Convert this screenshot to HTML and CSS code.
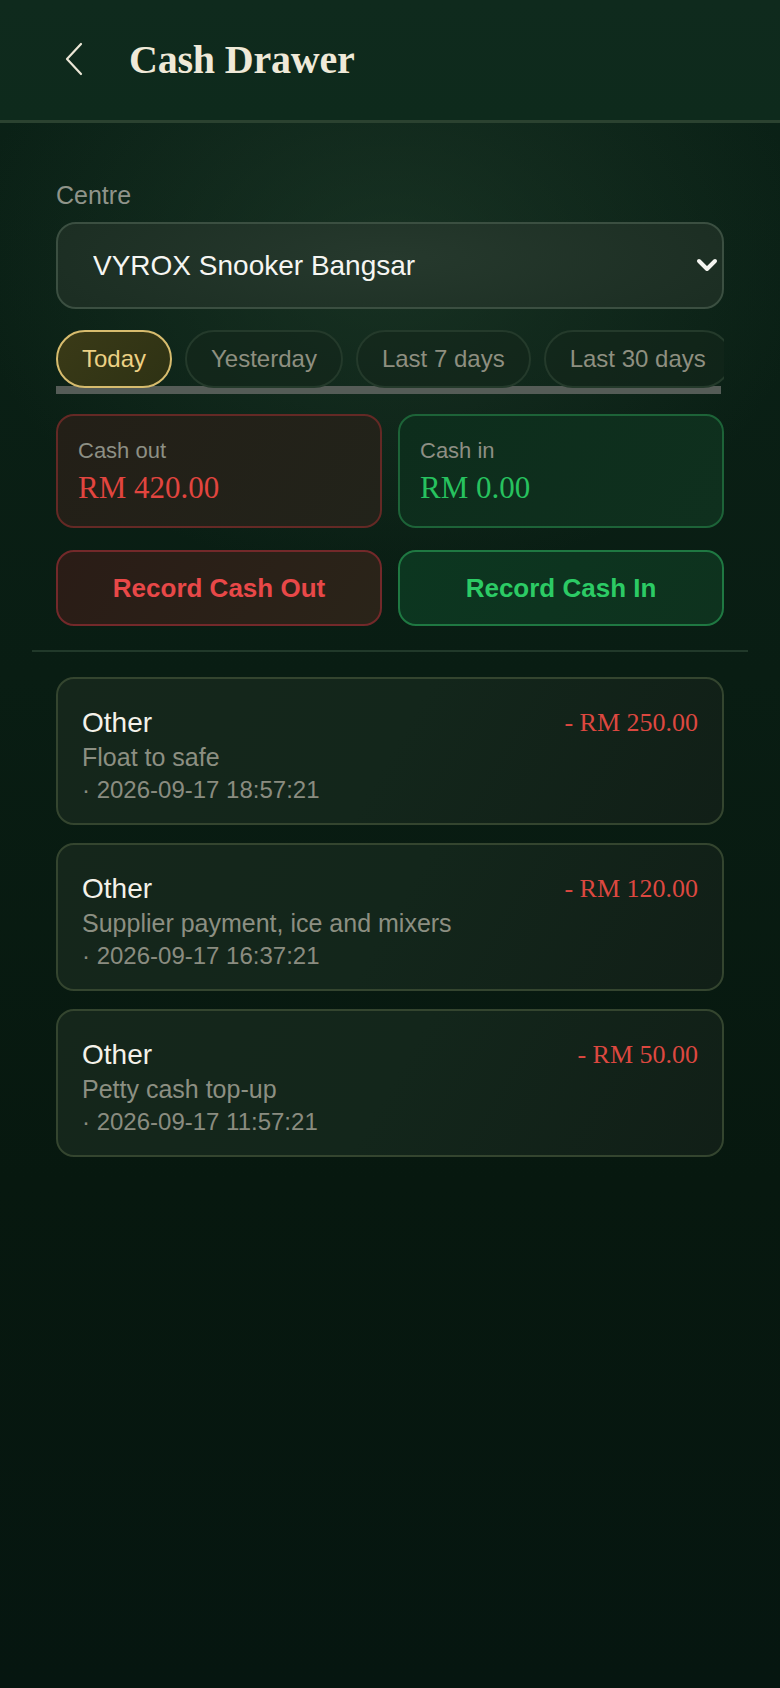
FILE: index.html
```html
<!DOCTYPE html>
<html lang="en">
<head>
  <meta charset="UTF-8">
  <meta name="viewport" content="width=device-width, initial-scale=1.0">
  <title>Cash Drawer</title>
  <link rel="stylesheet" href="styles.css">
</head>
<body>
  <header class="topbar">
    <button class="back-btn" aria-label="Back">
      <svg width="20" height="34" viewBox="0 0 20 34" fill="none">
        <path d="M17 2 L3 17 L17 32" stroke="#ebe6d6" stroke-width="2.2" stroke-linecap="round" stroke-linejoin="round"/>
      </svg>
    </button>
    <h1>Cash Drawer</h1>
  </header>

  <main class="content">
    <label class="field-label" for="centre">Centre</label>
    <div class="select-wrap">
      <select id="centre" class="centre-select">
        <option>VYROX Snooker Bangsar</option>
      </select>
      <svg class="select-arrow" width="22" height="14" viewBox="0 0 22 14" fill="none">
        <path d="M3 3 L11 11 L19 3" stroke="#f4f4f0" stroke-width="4" stroke-linecap="round" stroke-linejoin="round"/>
      </svg>
    </div>

    <div class="range-tabs">
      <button class="chip active">Today</button>
      <button class="chip">Yesterday</button>
      <button class="chip">Last 7 days</button>
      <button class="chip">Last 30 days</button>
    </div>
    <div class="scroll-bar"></div>

    <div class="totals">
      <div class="total-card out">
        <p class="total-label">Cash out</p>
        <p class="total-value">RM 420.00</p>
      </div>
      <div class="total-card in">
        <p class="total-label">Cash in</p>
        <p class="total-value">RM 0.00</p>
      </div>
    </div>

    <div class="actions">
      <button class="action-btn out">Record Cash Out</button>
      <button class="action-btn in">Record Cash In</button>
    </div>

    <hr class="divider">

    <ul class="entries">
      <li class="entry">
        <div class="entry-top">
          <span class="entry-type">Other</span>
          <span class="entry-amount">- RM 250.00</span>
        </div>
        <p class="entry-note">Float to safe</p>
        <p class="entry-time">· 2026-09-17 18:57:21</p>
      </li>
      <li class="entry">
        <div class="entry-top">
          <span class="entry-type">Other</span>
          <span class="entry-amount">- RM 120.00</span>
        </div>
        <p class="entry-note">Supplier payment, ice and mixers</p>
        <p class="entry-time">· 2026-09-17 16:37:21</p>
      </li>
      <li class="entry">
        <div class="entry-top">
          <span class="entry-type">Other</span>
          <span class="entry-amount">- RM 50.00</span>
        </div>
        <p class="entry-note">Petty cash top-up</p>
        <p class="entry-time">· 2026-09-17 11:57:21</p>
      </li>
    </ul>
  </main>
</body>
</html>
```

FILE: styles.css
```css
/* Reset */
* {
  margin: 0;
  padding: 0;
  box-sizing: border-box;
}

body {
  min-height: 1688px;
  font-family: 'Liberation Sans', Arial, sans-serif;
  color: #f2f0e6;
  background:
    radial-gradient(ellipse 420px 320px at 50% 260px, rgba(40, 70, 50, 0.45), rgba(40, 70, 50, 0) 100%),
    linear-gradient(180deg, #0b2217 0%, #091d13 40%, #07180f 70%, #061610 100%);
}

/* Header */
.topbar {
  height: 123px;
  display: flex;
  align-items: center;
  padding: 2px 0 4px 64px;
  background: linear-gradient(180deg, #0f2a1d 0%, #0e2a1c 100%);
  border-bottom: 3px solid #2b4230;
}

.back-btn {
  background: none;
  border: none;
  display: flex;
  align-items: center;
  margin-right: 45px;
}

.topbar h1 {
  font-family: 'Liberation Serif', 'Times New Roman', serif;
  font-weight: 600;
  font-size: 40px;
  color: #efe9d8;
  letter-spacing: -0.2px;
}

/* Content */
.content {
  padding: 56px 56px 40px;
}

.field-label {
  display: block;
  font-size: 25px;
  line-height: 32px;
  color: #8f948a;
  margin-bottom: 11px;
}

.select-wrap {
  position: relative;
}

.centre-select {
  appearance: none;
  -webkit-appearance: none;
  width: 100%;
  height: 87px;
  padding: 0 60px 0 35px;
  font-family: 'Liberation Sans', Arial, sans-serif;
  font-size: 28px;
  color: #f6f6f2;
  background: radial-gradient(ellipse 360px 90px at 50% 40%, #26392d 0%, #1c2e23 100%);
  border: 2px solid #3b4f41;
  border-radius: 20px;
}

.select-arrow {
  position: absolute;
  right: 6px;
  top: 36px;
}

/* Date range chips */
.range-tabs {
  display: flex;
  gap: 13px;
  margin-top: 21px;
  overflow-x: auto;
  scrollbar-width: none;
}

.range-tabs::-webkit-scrollbar {
  display: none;
}

.scroll-bar {
  height: 8px;
  margin: -2px 3px 0 0;
  background: #555c57;
}

.chip {
  flex: 0 0 auto;
  height: 58px;
  padding: 0 24px;
  font-family: 'Liberation Sans', Arial, sans-serif;
  font-size: 24px;
  color: #8e8f80;
  background: rgba(20, 38, 27, 0.6);
  border: 2px solid #243a2b;
  border-radius: 29px;
}

.chip.active {
  color: #ecd184;
  background: linear-gradient(135deg, #3a3a17, #2e3214);
  border-color: #d7bc6e;
}

/* Totals */
.totals,
.actions {
  display: grid;
  grid-template-columns: 1fr 1fr;
  gap: 16px;
}

.totals {
  margin-top: 20px;
}

.total-card {
  height: 114px;
  padding: 20px 20px 16px;
  border: 2px solid;
  border-radius: 18px;
}

.total-card.out {
  background: linear-gradient(120deg, #231f17 0%, #22231a 100%);
  border-color: #642925;
}

.total-card.in {
  background: linear-gradient(120deg, #0d2d1c 0%, #0f301e 100%);
  border-color: #1d6338;
}

.total-label {
  font-size: 22px;
  line-height: 30px;
  color: #8d8f84;
}

.total-value {
  font-family: 'Liberation Serif', 'Times New Roman', serif;
  font-size: 31px;
  line-height: 40px;
  margin-top: 2px;
}

.total-card.out .total-value {
  color: #e2453f;
}

.total-card.in .total-value {
  color: #27c25f;
}

/* Action buttons */
.actions {
  margin-top: 22px;
}

.action-btn {
  height: 76px;
  font-family: 'Liberation Sans', Arial, sans-serif;
  font-size: 26px;
  font-weight: 700;
  border: 2px solid;
  border-radius: 18px;
}

.action-btn.out {
  color: #e84848;
  background: linear-gradient(120deg, #2a1c16 0%, #2a2419 100%);
  border-color: #73292a;
}

.action-btn.in {
  color: #2ccb65;
  background: linear-gradient(120deg, #0c3620 0%, #0e321e 100%);
  border-color: #1f7842;
}

.divider {
  border: none;
  border-top: 2px solid #21392a;
  margin: 24px -24px 25px;
}

/* Entries list */
.entries {
  list-style: none;
  display: flex;
  flex-direction: column;
  gap: 18px;
}

.entry {
  height: 148px;
  padding: 27px 24px 17px;
  background: linear-gradient(120deg, #15261b 0%, #13261b 50%, #111f17 100%);
  border: 2px solid #34452f;
  border-radius: 18px;
}

.entry-top {
  display: flex;
  justify-content: space-between;
  align-items: center;
  height: 34px;
}

.entry-type {
  font-size: 28px;
  color: #f4f2ea;
}

.entry-amount {
  font-family: 'Liberation Serif', 'Times New Roman', serif;
  font-size: 26px;
  color: #dc4840;
}

.entry-note {
  font-size: 25px;
  line-height: 34px;
  color: #8c8f82;
}

.entry-time {
  font-size: 24px;
  line-height: 32px;
  color: #8a8c80;
}
```
